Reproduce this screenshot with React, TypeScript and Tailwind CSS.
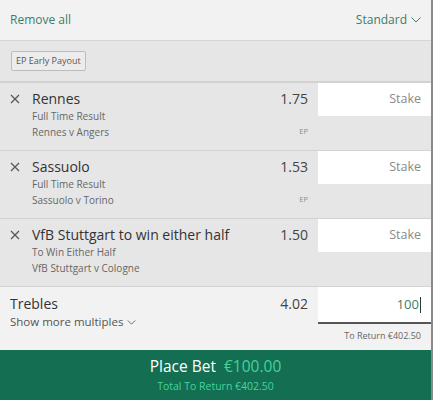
import React from 'react';

interface Selection {
  name: string;
  market: string;
  event: string;
  odds: string;
  ep: boolean;
}

const selections: Selection[] = [
  { name: 'Rennes', market: 'Full Time Result', event: 'Rennes v Angers', odds: '1.75', ep: true },
  { name: 'Sassuolo', market: 'Full Time Result', event: 'Sassuolo v Torino', odds: '1.53', ep: true },
  { name: 'VfB Stuttgart to win either half', market: 'To Win Either Half', event: 'VfB Stuttgart v Cologne', odds: '1.50', ep: false },
];

const Chevron = ({ className }: { className?: string }) => (
  <svg viewBox="0 0 10 6" className={className} fill="none" stroke="currentColor" strokeWidth="1">
    <path d="M0.5 0.5 L5 5 L9.5 0.5" />
  </svg>
);

const SelectionRow = ({ s }: { s: Selection }) => (
  <div className="flex h-[68px] border-b border-[#d2d2d2] bg-[#e6e6e6]">
    <div className="flex flex-1 pl-[10px] pt-[6px]">
      <svg viewBox="0 0 10 10" className="mt-[5px] h-[10px] w-[10px] text-[#555]" stroke="currentColor" strokeWidth="1.2">
        <path d="M1 1 L9 9 M9 1 L1 9" />
      </svg>
      <div className="ml-[12px] flex flex-1 flex-col">
        <div className="flex items-start justify-between pr-[10px]">
          <span className="text-[14px] leading-[20px] text-[#333]">{s.name}</span>
          <span className="text-[14px] leading-[20px] text-[#444]">{s.odds}</span>
        </div>
        <span className="text-[10px] leading-[15px] text-[#666]">{s.market}</span>
        <div className="flex items-center justify-between pr-[10px]">
          <span className="text-[10px] leading-[16px] text-[#666]">{s.event}</span>
          {s.ep && <span className="text-[7.5px] text-[#8c8c8c]">EP</span>}
        </div>
      </div>
    </div>
    <div className="w-[113px]">
      <div className="flex h-[33px] items-center justify-end bg-white pr-[10px] text-[12.5px] text-[#8a8a8a]">Stake</div>
    </div>
  </div>
);

export default function App() {
  return (
    <div className="h-[400px] w-[433px] border-r-2 border-[#8a8a8a] bg-[#f2f2f2]" style={{ fontFamily: '"Open Sans", "Liberation Sans", sans-serif' }}>
      <div className="flex h-[41px] items-center justify-between border-b border-[#d6d6d6] px-[10px] text-[12px] text-[#3d7d69]">
        <span>Remove all</span>
        <span className="flex items-center gap-[4px]">
          Standard
          <Chevron className="h-[6px] w-[10px]" />
        </span>
      </div>
      <div className="flex h-[42px] items-center border-b-2 border-[#d2d2d2] bg-[#e6e6e6] px-[11px]">
        <span className="rounded-[2px] border border-[#bdbdbd] bg-[#ececec] px-[4px] py-[2px] text-[9px] text-[#555]">EP Early Payout</span>
      </div>
      {selections.map((s) => (
        <SelectionRow key={s.name} s={s} />
      ))}
      <div className="flex h-[63px] bg-[#f2f2f2]">
        <div className="flex flex-1 flex-col pl-[10px] pr-[10px] pt-[8px]">
          <div className="flex justify-between">
            <span className="text-[14px] leading-[18px] text-[#333]">Trebles</span>
            <span className="text-[14px] leading-[18px] text-[#444]">4.02</span>
          </div>
          <span className="flex items-center gap-[4px] text-[11.5px] leading-[18px] text-[#555]">
            Show more multiples
            <Chevron className="h-[5px] w-[9px]" />
          </span>
        </div>
        <div className="flex w-[113px] flex-col">
          <div className="flex h-[37px] items-center justify-end border-b-2 border-[#555] bg-white pr-[10px] text-[13px] text-[#3d7d69]">
            100<span className="ml-[1px] h-[16px] w-[1px] bg-[#333]" />
          </div>
          <span className="mt-[5px] pr-[10px] text-right text-[9px] text-[#666]">To Return €402.50</span>
        </div>
      </div>
      <div className="flex h-[50px] flex-col items-center justify-center bg-[#136e52]">
        <div className="flex items-baseline gap-[8px] text-[15.5px] leading-[20px]">
          <span className="text-white">Place Bet</span>
          <span className="text-[#44d39c]">€100.00</span>
        </div>
        <span className="mt-[3px] text-[10.5px] text-[#44d39c]">Total To Return €402.50</span>
      </div>
    </div>
  );
}
